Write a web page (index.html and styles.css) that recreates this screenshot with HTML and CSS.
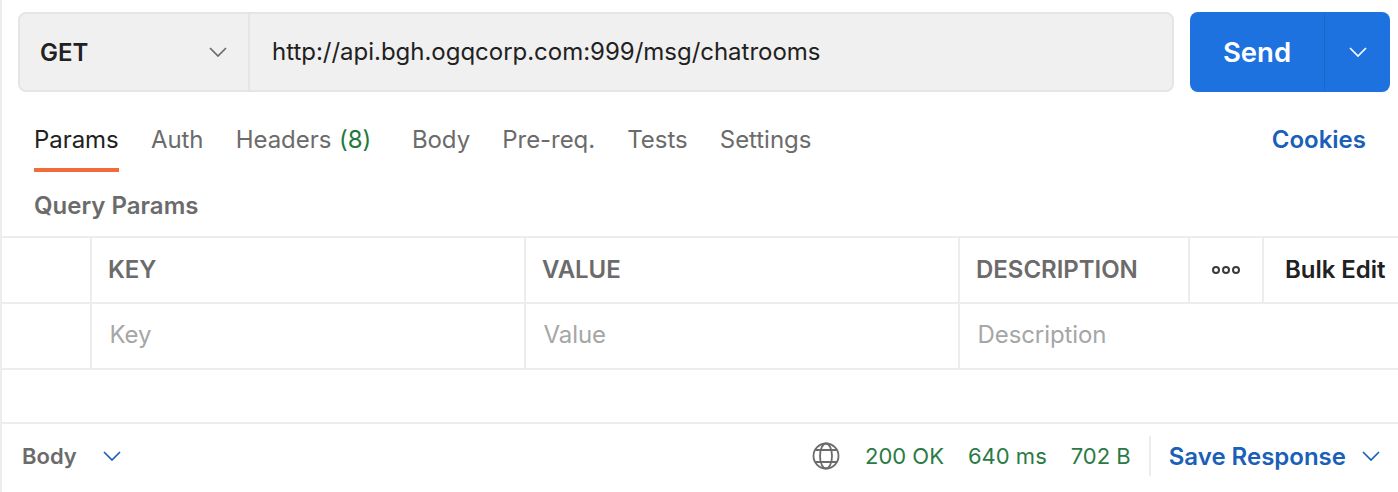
FILE: index.html
```html
<!DOCTYPE html>
<html lang="en">
  <head>
    <meta charset="UTF-8" />
    <title>Request</title>
    <link rel="stylesheet" href="styles.css">
  </head>
  <body>
    <div class="pane">
      <div class="url-bar">
        <div class="url-box">
          <div class="method">
            <span>GET</span>
            <svg class="chevron" viewBox="0 0 18 10"><path d="M1 1l8 8 8-8" /></svg>
          </div>
          <div class="url">http://api.bgh.ogqcorp.com:999/msg/chatrooms</div>
        </div>
        <div class="send">
          <div class="send-label">Send</div>
          <div class="send-more">
            <svg class="chevron" viewBox="0 0 18 10"><path d="M1 1l8 8 8-8" /></svg>
          </div>
        </div>
      </div>

      <div class="tabs">
        <div class="tab active">Params</div>
        <div class="tab">Auth</div>
        <div class="tab tab-headers">Headers <span class="count">(8)</span></div>
        <div class="tab">Body</div>
        <div class="tab">Pre-req.</div>
        <div class="tab">Tests</div>
        <div class="tab">Settings</div>
        <div class="cookies">Cookies</div>
      </div>

      <div class="section-title">Query Params</div>

      <div class="table">
        <div class="row head">
          <div class="cell"></div>
          <div class="cell">KEY</div>
          <div class="cell">VALUE</div>
          <div class="cell">DESCRIPTION</div>
          <div class="cell dots"><i></i><i></i><i></i></div>
          <div class="cell bulk">Bulk Edit</div>
        </div>
        <div class="row body-row">
          <div class="cell"></div>
          <div class="cell">Key</div>
          <div class="cell">Value</div>
          <div class="cell wide">Description</div>
        </div>
      </div>

      <div class="footer">
        <div class="body-toggle">
          <span>Body</span>
          <svg class="chevron" viewBox="0 0 18 10"><path d="M1 1l8 8 8-8" /></svg>
        </div>
        <div class="status">
          <svg class="globe" viewBox="0 0 28 28">
            <circle cx="14" cy="14" r="12.5" />
            <ellipse cx="14" cy="14" rx="6" ry="12.5" />
            <path d="M3.5 8h21M3.5 20h21" />
          </svg>
          <span class="stat">200 OK</span>
          <span class="stat">640 ms</span>
          <span class="stat last">702 B</span>
          <div class="save">
            <span>Save Response</span>
            <svg class="chevron" viewBox="0 0 18 10"><path d="M1 1l8 8 8-8" /></svg>
          </div>
        </div>
      </div>
    </div>
  </body>
</html>
```

FILE: styles.css
```css
body {
  margin: 0;
  background: #fff;
  font-family: Inter, "Noto Sans", sans-serif;
  font-size: 24px;
  color: #212121;
}

.pane {
  height: 492px;
  box-sizing: border-box;
  border-left: 2px solid #ededed;
  overflow: hidden;
}

.chevron {
  width: 18px;
  height: 10px;
  fill: none;
  stroke: #6b6b6b;
  stroke-width: 1.7;
}

.url-bar {
  display: flex;
  gap: 16px;
  padding: 12px 8px 0 16px;
}

.url-box {
  flex: 1;
  display: flex;
  height: 80px;
  box-sizing: border-box;
  background: #f0f0f0;
  border: 2px solid #e5e5e5;
  border-radius: 8px;
}

.method {
  width: 230px;
  box-sizing: border-box;
  padding: 0 21px 0 20px;
  border-right: 2px solid #e5e5e5;
  display: flex;
  align-items: center;
  justify-content: space-between;
  font-weight: 600;
}

.url {
  padding-left: 22px;
  line-height: 76px;
  letter-spacing: -0.02px;
}

.send {
  width: 200px;
  height: 80px;
  display: flex;
  background: #1d72e0;
  border-radius: 8px;
  color: #fff;
}

.send-label {
  width: 134px;
  border-right: 1px solid #1a68cc;
  text-align: center;
  line-height: 80px;
  font-size: 27.5px;
  font-weight: 600;
}

.send-more {
  flex: 1;
  display: flex;
  align-items: center;
  justify-content: center;
}

.send-more .chevron {
  stroke: #fff;
}

.tabs {
  display: flex;
  gap: 32.2px;
  height: 80px;
  padding: 0 32px;
  box-sizing: border-box;
  letter-spacing: -0.05px;
}

.tab {
  height: 80px;
  box-sizing: border-box;
  padding-top: 33px;
  line-height: 30px;
  color: #6b6b6b;
}

.tab.active {
  color: #212121;
  border-bottom: 4px solid #f26b3a;
}

.tab-headers {
  margin-right: 8.5px;
}

.count {
  color: #1f7a3d;
  margin-left: 1px;
}

.cookies {
  margin-left: auto;
  padding-top: 33px;
  line-height: 30px;
  font-weight: 600;
  color: #1a5fb8;
  letter-spacing: 0;
}

.section-title {
  height: 64px;
  padding: 19px 0 0 32px;
  box-sizing: border-box;
  line-height: 30px;
  font-weight: 600;
  color: #6b6b6b;
}

.table {
  border-top: 2px solid #ededed;
}

.row {
  display: grid;
  grid-template-columns: 90px 434px 434px 230px 74px 1fr;
  height: 66px;
  box-sizing: border-box;
  border-bottom: 2px solid #ededed;
}

.cell {
  border-right: 2px solid #ededed;
  padding-left: 16px;
  line-height: 64px;
}

.cell:last-child {
  border-right: none;
}

.head .cell {
  font-weight: 600;
  color: #6b6b6b;
  letter-spacing: -0.03px;
}

.head .bulk {
  color: #212121;
  padding-left: 21px;
  white-space: nowrap;
}

.dots {
  display: flex;
  align-items: center;
  gap: 2px;
  padding-left: 22px;
}

.dots i {
  width: 8px;
  height: 8px;
  box-sizing: border-box;
  border: 2px solid #3a3a3a;
  border-radius: 50%;
}

.body-row .cell {
  color: #a6a6a6;
  padding-left: 17.5px;
  line-height: 62px;
  letter-spacing: -0.08px;
}

.wide {
  grid-column: span 3;
}

.footer {
  margin-top: 52px;
  height: 68px;
  box-sizing: border-box;
  border-top: 2px solid #ededed;
  display: flex;
  align-items: center;
  justify-content: space-between;
  padding: 0 18px 2px 20px;
}

.body-toggle {
  display: flex;
  align-items: center;
  gap: 26px;
  font-size: 22px;
  font-weight: 600;
  color: #6b6b6b;
}

.body-toggle .chevron,
.save .chevron {
  stroke: #1a5fb8;
}

.status {
  display: flex;
  align-items: center;
}

.globe {
  width: 28px;
  height: 28px;
  fill: none;
  stroke: #6b6b6b;
  stroke-width: 1.8;
  margin-right: 25px;
}

.stat {
  font-size: 22px;
  color: #2a7a45;
  margin-right: 24px;
}

.stat.last {
  margin-right: 18px;
}

.save {
  display: flex;
  align-items: center;
  gap: 16px;
  height: 40px;
  padding-left: 18px;
  border-left: 2px solid #ededed;
  font-weight: 600;
  color: #1a5fb8;
}
```
